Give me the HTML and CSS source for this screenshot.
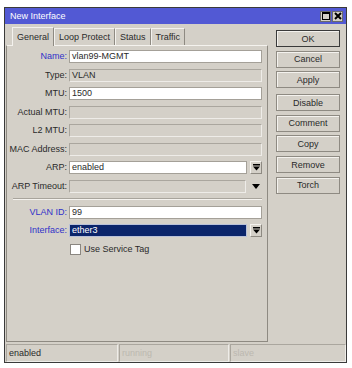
FILE: index.html
```html
<!DOCTYPE html>
<html lang="en">
<head>
  <meta charset="UTF-8">
  <title>New Interface</title>
  <link rel="stylesheet" href="styles.css">
</head>
<body>
  <div class="win">
    <!-- Title bar -->
    <div class="win__title">
      <span class="win__caption">New Interface</span>
      <span class="win__ctrl">
        <svg width="8" height="8" viewBox="0 0 8 8"><rect x="0.5" y="0.5" width="7" height="7" fill="none" stroke="#000"/><rect x="0" y="0" width="8" height="2" fill="#000"/></svg>
      </span>
      <span class="win__ctrl">
        <svg width="8" height="8" viewBox="0 0 8 8"><path d="M1 1L7 7M7 1L1 7" stroke="#000" stroke-width="2"/></svg>
      </span>
    </div>

    <div class="win__body">
      <div class="win__main">
        <!-- Tabs -->
        <div class="tabs">
          <div class="tabs__tab tabs__tab--active">General</div>
          <div class="tabs__tab">Loop Protect</div>
          <div class="tabs__tab">Status</div>
          <div class="tabs__tab">Traffic</div>
        </div>

        <!-- General panel -->
        <div class="panel">
          <div class="form">
            <label class="form__label form__label--key">Name:</label>
            <div class="form__field"><span class="input">vlan99-MGMT</span></div>

            <label class="form__label">Type:</label>
            <div class="form__field"><span class="input input--off">VLAN</span></div>

            <label class="form__label">MTU:</label>
            <div class="form__field"><span class="input">1500</span></div>

            <label class="form__label">Actual MTU:</label>
            <div class="form__field"><span class="input input--off"></span></div>

            <label class="form__label">L2 MTU:</label>
            <div class="form__field"><span class="input input--off"></span></div>

            <label class="form__label">MAC Address:</label>
            <div class="form__field"><span class="input input--off"></span></div>

            <label class="form__label">ARP:</label>
            <div class="form__field">
              <span class="input">enabled</span>
              <span class="drop">
                <svg width="7" height="7" viewBox="0 0 7 7"><rect x="0" y="0" width="7" height="1.5" fill="#000"/><path d="M0 2.5H7L3.5 6.5Z" fill="#000"/></svg>
              </span>
            </div>

            <label class="form__label">ARP Timeout:</label>
            <div class="form__field">
              <span class="input input--off"></span>
              <span class="drop drop--flat">
                <svg width="8" height="5" viewBox="0 0 8 5"><path d="M0 0H8L4 5Z" fill="#000"/></svg>
              </span>
            </div>

            <div class="form__sep"></div>

            <label class="form__label form__label--key">VLAN ID:</label>
            <div class="form__field"><span class="input">99</span></div>

            <label class="form__label form__label--key">Interface:</label>
            <div class="form__field">
              <span class="input input--sel">ether3</span>
              <span class="drop">
                <svg width="7" height="7" viewBox="0 0 7 7"><rect x="0" y="0" width="7" height="1.5" fill="#000"/><path d="M0 2.5H7L3.5 6.5Z" fill="#000"/></svg>
              </span>
            </div>

            <span></span>
            <div class="form__field form__check">
              <span class="check"></span>
              <span>Use Service Tag</span>
            </div>
          </div>
        </div>
      </div>

      <!-- Action buttons -->
      <div class="actions">
        <button class="btn btn--default">OK</button>
        <button class="btn">Cancel</button>
        <button class="btn">Apply</button>
        <button class="btn btn--group">Disable</button>
        <button class="btn">Comment</button>
        <button class="btn">Copy</button>
        <button class="btn">Remove</button>
        <button class="btn">Torch</button>
      </div>
    </div>

    <!-- Status bar -->
    <div class="status">
      <div class="status__cell status__cell--one">enabled</div>
      <div class="status__cell status__cell--two status__cell--dim">running</div>
      <div class="status__cell status__cell--three status__cell--dim">slave</div>
    </div>
  </div>
</body>
</html>
```

FILE: styles.css
```css
:root {
  --face: #d4d0c8;
  --edge: #8e8a82;
  --light: #f4f2ee;
  --text: #2a2a2a;
  --key: #3030c8;
  --title: #5259d4;
}
* { box-sizing: border-box; margin: 0; padding: 0; }
body {
  background: #fff;
  font-family: "Liberation Sans", Arial, sans-serif;
  font-size: 9px;
  color: var(--text);
}
.win {
  margin: 7px 0 0 4px;
  width: 343px;
  height: 356px;
  border: 1px solid #3a3a3a;
  background: var(--face);
  display: flex;
  flex-direction: column;
}
.win__title {
  height: 16px;
  background: var(--title);
  color: #fff;
  display: flex;
  align-items: center;
  padding: 0 3px 0 5px;
  gap: 1px;
}
.win__caption { flex: 1; font-size: 9px; }
.win__ctrl {
  width: 11px;
  height: 11px;
  background: var(--face);
  border: 1px solid #6a6a6a;
  display: flex;
  align-items: center;
  justify-content: center;
}
.win__body {
  flex: 1;
  display: flex;
  padding: 2px 0 2px 1px;
}
.win__main {
  width: 262px;
  display: flex;
  flex-direction: column;
}
.tabs {
  height: 19px;
  display: flex;
  align-items: flex-end;
  padding-left: 6px;
}
.tabs__tab {
  height: 17px;
  line-height: 16px;
  padding: 0 4px;
  border: 1px solid var(--edge);
  border-bottom: none;
  border-top-color: var(--light);
  border-left-color: var(--light);
  font-size: 9px;
}
.tabs__tab--active {
  height: 19px;
  line-height: 18px;
  background: var(--face);
  margin-bottom: -1px;
  position: relative;
}
.panel {
  flex: 1;
  border: 1px solid var(--edge);
  border-top-color: var(--light);
}
.form {
  display: grid;
  grid-template-columns: 60px 1fr;
  column-gap: 2px;
  row-gap: 5.5px;
  padding: 4px 5px 0 0;
}
.form__label {
  height: 13px;
  line-height: 13px;
  text-align: right;
  white-space: nowrap;
}
.form__label--key { color: var(--key); }
.form__field {
  height: 13px;
  display: flex;
  align-items: center;
}
.input {
  flex: 1;
  height: 13px;
  line-height: 11px;
  padding-left: 2px;
  background: #fff;
  border: 1px solid #a4a098;
}
.input--off {
  background: var(--face);
  border-color: #aaa69e;
  border-bottom-color: #eeece8;
  border-right-color: #eeece8;
}
.input--sel {
  background: #0a246a;
  color: #fff;
  border-color: #b8c0d8;
}
.drop {
  width: 12px;
  height: 13px;
  margin-left: 3px;
  border: 1px solid var(--edge);
  border-top-color: var(--light);
  border-left-color: var(--light);
  display: flex;
  align-items: center;
  justify-content: center;
}
.drop--flat { border-color: transparent; margin-left: 4px; }
.form__sep {
  grid-column: 1 / -1;
  height: 2px;
  margin-left: 6px;
  border-top: 1px solid #a8a49c;
  border-bottom: 1px solid var(--light);
}
.form__check { gap: 3px; padding-left: 1px; }
.check {
  width: 11px;
  height: 11px;
  background: #fff;
  border: 1px solid #8a8680;
}
.actions {
  width: 64px;
  margin-left: 8px;
  padding-top: 4px;
  display: flex;
  flex-direction: column;
  gap: 3.7px;
}
.btn {
  height: 17px;
  background: var(--face);
  border: 1px solid #8e8a82;
  box-shadow: inset 1px 1px 0 var(--light);
  font-family: inherit;
  font-size: 9px;
  color: var(--text);
}
.btn--default { border-color: #3a3a3a; }
.btn--group { margin-top: 2px; }
.status {
  height: 18px;
  display: flex;
  gap: 1px;
  padding-left: 1px;
}
.status__cell {
  height: 18px;
  line-height: 16px;
  padding-left: 2px;
  border: 1px solid #aaa69e;
  border-bottom-color: #eeece8;
  border-right-color: #eeece8;
}
.status__cell--one { width: 112px; }
.status__cell--two { width: 110px; }
.status__cell--three { flex: 1; }
.status__cell--dim { color: #bcb8b0; }
```
